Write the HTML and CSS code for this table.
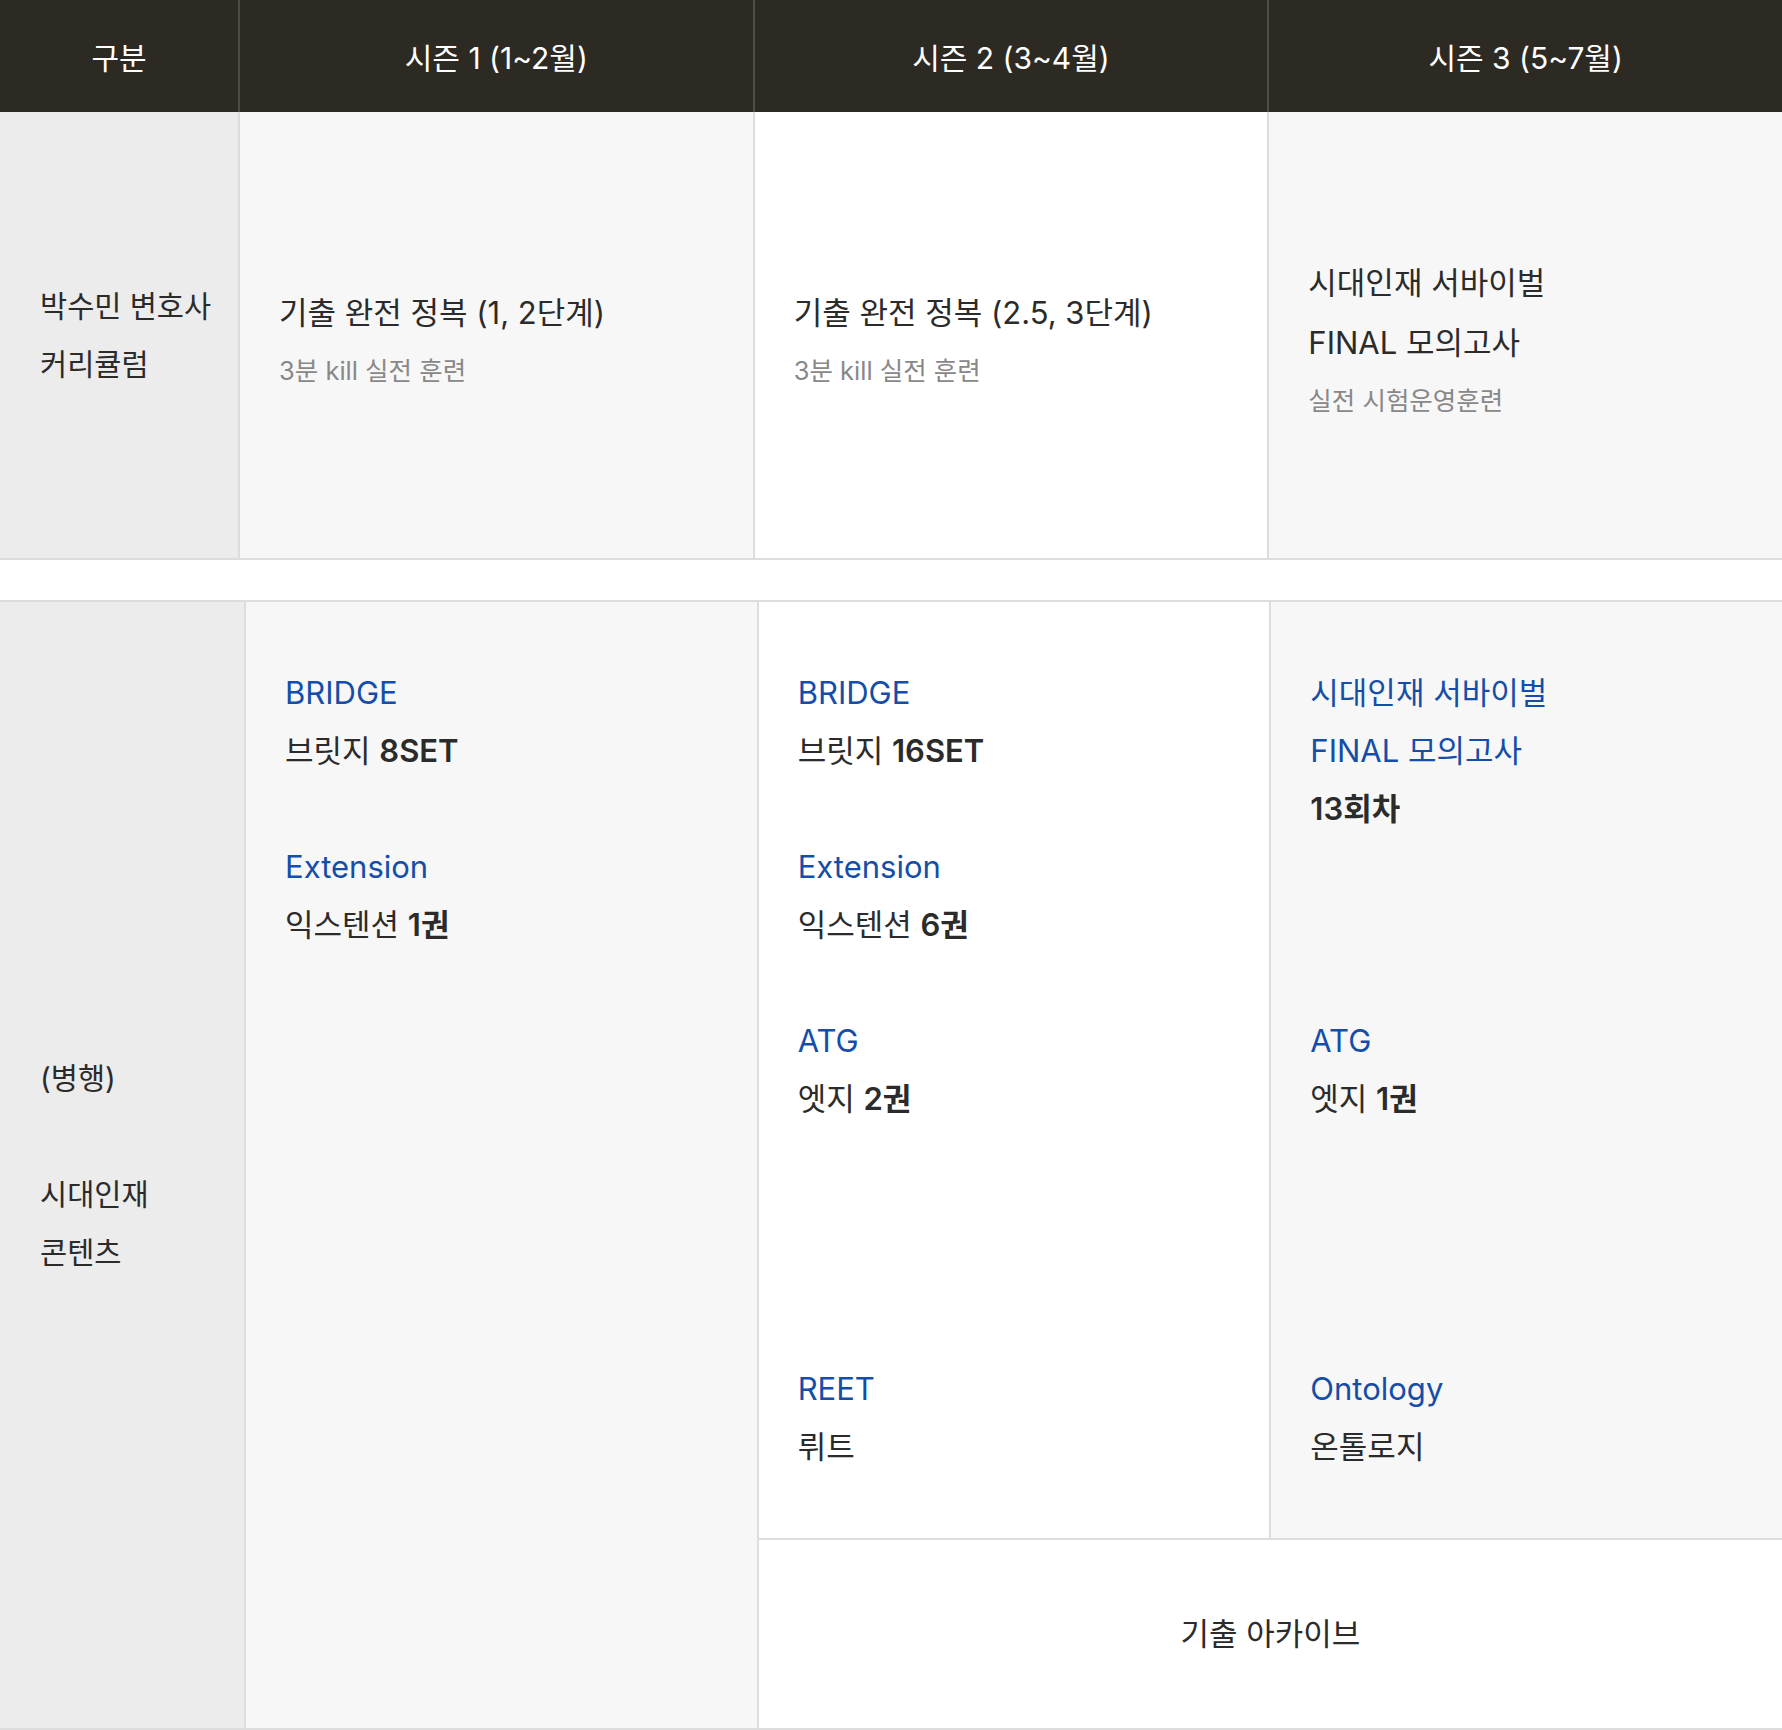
FILE: index.html
```html
<!DOCTYPE html>
<html lang="ko">
<head>
  <meta charset="UTF-8" />
  <meta name="viewport" content="width=device-width, initial-scale=1.0" />
  <title>시대인재 커리큘럼</title>
  <link rel="stylesheet" href="styles.css">
</head>
<body>

  <div class="plan">
    <div class="plan-head">
      <div class="kopf">구분</div>
      <div class="kopf">시즌 1 (1~2월)</div>
      <div class="kopf">시즌 2 (3~4월)</div>
      <div class="kopf">시즌 3 (5~7월)</div>
    </div>
    <div class="plan-row">
      <div class="label">
        <p>박수민 변호사</p>
        <p>커리큘럼</p>
      </div>
      <div class="season grau">
        <p class="main">기출 완전 정복 (1, 2단계)</p>
        <p class="sub">3분 kill 실전 훈련</p>
      </div>
      <div class="season">
        <p class="main">기출 완전 정복 (2.5, 3단계)</p>
        <p class="sub">3분 kill 실전 훈련</p>
      </div>
      <div class="season grau">
        <p class="main">시대인재 서바이벌</p>
        <p class="main">FINAL 모의고사</p>
        <p class="sub">실전 시험운영훈련</p>
      </div>
    </div>
  </div>

  <div class="inhalt">
    <div class="label lang">
      <p>(병행)</p>
      <p>&nbsp;</p>
      <p>시대인재</p>
      <p>콘텐츠</p>
    </div>

    <div class="spalte grau lang">
      <div class="item">
        <p class="en">BRIDGE</p>
        <p>브릿지 <b>8SET</b></p>
      </div>
      <div class="item gap1">
        <p class="en">Extension</p>
        <p>익스텐션 <b>1권</b></p>
      </div>
    </div>

    <div class="spalte">
      <div class="item">
        <p class="en">BRIDGE</p>
        <p>브릿지 <b>16SET</b></p>
      </div>
      <div class="item gap1">
        <p class="en">Extension</p>
        <p>익스텐션 <b>6권</b></p>
      </div>
      <div class="item gap1">
        <p class="en">ATG</p>
        <p>엣지 <b>2권</b></p>
      </div>
      <div class="item gap4">
        <p class="en">REET</p>
        <p>뤼트</p>
      </div>
    </div>

    <div class="spalte grau">
      <div class="item">
        <p class="en">시대인재 서바이벌</p>
        <p class="en">FINAL 모의고사</p>
        <p><b>13회차</b></p>
      </div>
      <div class="item gap3">
        <p class="en">ATG</p>
        <p>엣지 <b>1권</b></p>
      </div>
      <div class="item gap4">
        <p class="en">Ontology</p>
        <p>온톨로지</p>
      </div>
    </div>

    <div class="archiv">기출 아카이브</div>
  </div>

</body>
</html>
```

FILE: styles.css
```css
body {
  font-family: "Inter", "Noto Sans CJK KR", sans-serif;
  background: white;
  color: #2b2b2b;
  margin: 0;
}

p {
  margin: 0;
}

b {
  font-weight: 600;
}

/* Saisonplan oben */

.plan-head,
.plan-row {
  display: grid;
  grid-template-columns: 238px repeat(3, 1fr);
}

.plan-head {
  background: #2d2a24;
}

.kopf {
  height: 112px;
  display: flex;
  align-items: center;
  justify-content: center;
  color: white;
  font-size: 30px;
}

.kopf + .kopf {
  border-left: 2px solid #4f4c46;
}

.plan-row {
  border-bottom: 2px solid #dddddd;
}

.label {
  background: #ececec;
  padding-left: 40px;
  display: flex;
  flex-direction: column;
  justify-content: center;
  font-size: 29.5px;
  line-height: 58px;
}

.plan-row .label {
  min-height: 446px;
}

.season {
  display: flex;
  flex-direction: column;
  justify-content: center;
  padding: 11px 39px 0;
  border-left: 2px solid #dddddd;
  background: white;
}

.grau {
  background: #f7f7f7;
}

.main {
  font-size: 31px;
  line-height: 60px;
}

.sub {
  font-size: 25.5px;
  line-height: 56px;
  color: #888888;
}

/* Inhalte unten */

.inhalt {
  display: grid;
  grid-template-columns: 244px repeat(3, 1fr);
  margin-top: 40px;
  border-top: 2px solid #dddddd;
  border-bottom: 2px solid #dddddd;
}

.lang {
  grid-row: 1 / 3;
}

.spalte {
  padding: 62px 39px;
  border-left: 2px solid #dddddd;
  font-size: 31px;
  line-height: 58px;
}

.spalte:not(.grau) {
  background: white;
}

.en {
  color: #144ea8;
}

.gap1 { margin-top: 58px; }
.gap3 { margin-top: 174px; }
.gap4 { margin-top: 232px; }

.archiv {
  grid-column: 3 / 5;
  border-left: 2px solid #dddddd;
  border-top: 2px solid #dddddd;
  padding: 65px 0;
  text-align: center;
  font-size: 31px;
  line-height: 58px;
}
```
